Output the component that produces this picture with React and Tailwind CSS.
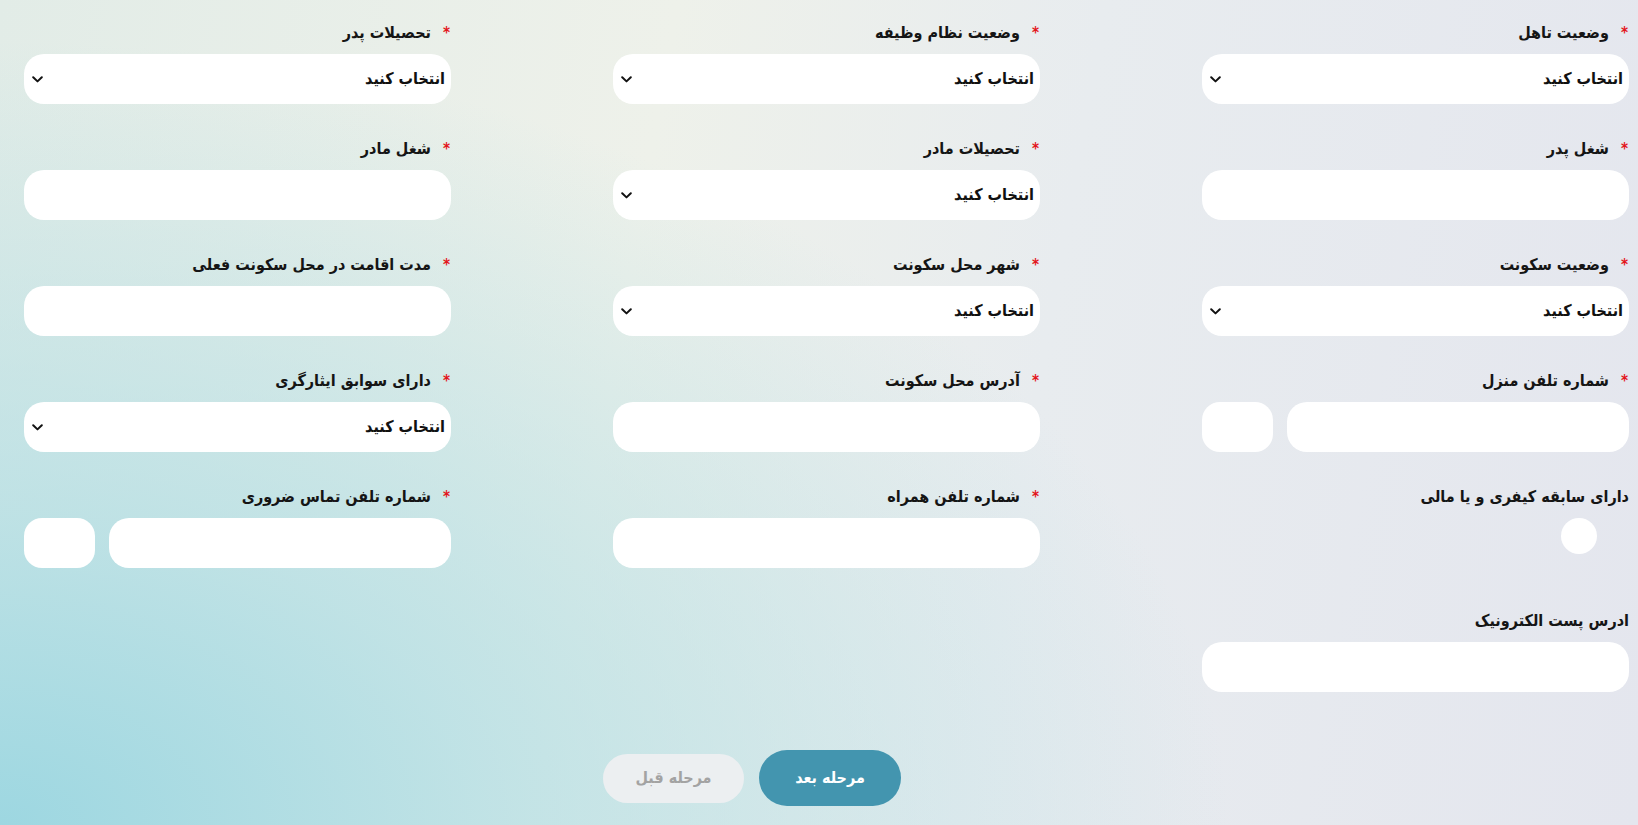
import React from "react";

const fields = [
  { label: "وضعیت تاهل", type: "select", required: true },
  { label: "وضعیت نظام وظیفه", type: "select", required: true },
  { label: "تحصیلات پدر", type: "select", required: true },
  { label: "شغل پدر", type: "input", required: true },
  { label: "تحصیلات مادر", type: "select", required: true },
  { label: "شغل مادر", type: "input", required: true },
  { label: "وضعیت سکونت", type: "select", required: true },
  { label: "شهر محل سکونت", type: "select", required: true },
  { label: "مدت اقامت در محل سکونت فعلی", type: "input", required: true },
  { label: "شماره تلفن منزل", type: "phone", required: true },
  { label: "آدرس محل سکونت", type: "input", required: true },
  { label: "دارای سوابق ایثارگری", type: "select", required: true },
  { label: "دارای سابقه کیفری و یا مالی", type: "toggle", required: false },
  { label: "شماره تلفن همراه", type: "input", required: true },
  { label: "شماره تلفن تماس ضروری", type: "phone", required: true },
  { label: "ادرس پست الکترونیک", type: "input", required: false, extraTop: true },
];

function Chevron() {
  return (
    <svg width="11" height="7" viewBox="0 0 11 7" fill="none" className="shrink-0">
      <path d="M1.2 1.2 5.5 5.4 9.8 1.2" stroke="#111" strokeWidth="2" strokeLinecap="round" strokeLinejoin="round" />
    </svg>
  );
}

function Label({ text, required }) {
  return (
    <div className="flex items-center h-5 mb-[11px] text-[16px] font-bold text-[#151515]">
      {required ? <span className="text-[#e3151b] text-[15px] mr-[1px] ml-[12px] leading-none">*</span> : null}
      <span>{text}</span>
    </div>
  );
}

function Control({ type }) {
  if (type === "select") {
    return (
      <div className="flex items-center justify-between h-[50px] w-full rounded-[20px] bg-white pr-[6px] pl-[8px] text-[16px] font-bold text-[#111]">
        <span>انتخاب کنید</span>
        <Chevron />
      </div>
    );
  }
  if (type === "phone") {
    return (
      <div className="flex gap-[14px]">
        <input className="h-[50px] flex-1 rounded-[20px] bg-white outline-none px-3" />
        <input className="h-[50px] w-[71px] rounded-[18px] bg-white outline-none px-2" />
      </div>
    );
  }
  if (type === "toggle") {
    return (
      <div className="flex">
        <div className="w-9 h-9 rounded-full bg-white mr-[32px]" />
      </div>
    );
  }
  return <input className="h-[50px] w-full rounded-[20px] bg-white outline-none px-3" />;
}

export default function App() {
  return (
    <div
      dir="rtl"
      className="min-h-screen w-full bg-[radial-gradient(ellipse_75%_95%_at_0%_100%,#9dd7e1_0%,rgba(178,222,228,0.75)_40%,rgba(205,226,229,0)_100%),linear-gradient(100deg,#e2ece7_0%,#eef1ea_38%,#e8ecef_62%,#e4e6ee_100%)]"
      style={{ fontFamily: '"DejaVu Sans Condensed", "DejaVu Sans", sans-serif' }}
    >
      <div className="grid grid-cols-[427px_427px_427px] gap-x-[162px] gap-y-[35px] pr-[9px] pt-[23px]">
        {fields.map((f) => (
          <div key={f.label} className={f.extraTop ? "mt-[8px]" : ""}>
            <Label text={f.label} required={f.required} />
            <Control type={f.type} />
          </div>
        ))}
      </div>

      <div className="flex items-center gap-[15px] pr-[737px] pt-[58px] pb-[21px]">
        <button className="h-[56px] w-[142px] rounded-full bg-[#4395af] text-white text-[16px] font-bold">
          مرحله بعد
        </button>
        <button className="h-[49px] w-[141px] rounded-full bg-[#eceff1] text-[#a3a3a3] text-[16px] font-bold">
          مرحله قبل
        </button>
      </div>
    </div>
  );
}
